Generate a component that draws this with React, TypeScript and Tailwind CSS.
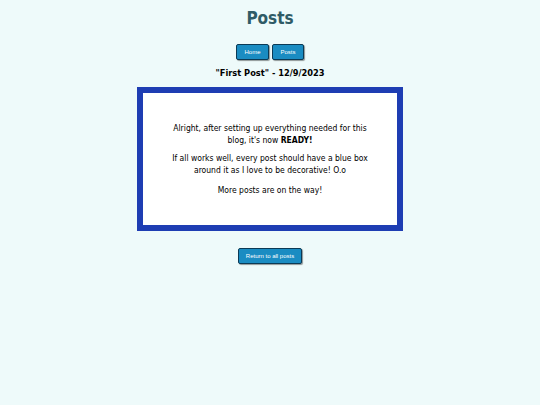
export default function App() {
  const btn =
    "whitespace-nowrap rounded-[2px] border border-[#0b3a55] bg-[#1a8cc2] text-[6px] leading-[14px] text-white shadow-[1px_1px_1px_rgba(0,0,0,0.4)] [font-family:'Liberation_Sans',Arial,sans-serif]";
  return (
    <div className="min-h-[405px] w-full bg-[#eefafa] [font-family:'DejaVu_Sans',Verdana,sans-serif] [font-stretch:condensed] text-black">
      <div className="flex flex-col items-center pt-[8px]">
        <h1 className="text-[17px] font-bold leading-[20px] text-[#2f5b66]">Posts</h1>
        <nav className="mt-[16px] flex gap-[3px]">
          <button className={`${btn} w-[33px]`}>Home</button>
          <button className={`${btn} w-[32px]`}>Posts</button>
        </nav>
        <h2 className="mt-[7px] text-[9.2px] font-bold leading-[12px]">"First Post" - 12/9/2023</h2>
        <div className="mt-[8px] w-[266px] border-[6px] border-[#1e3db3] bg-white px-[20px] py-[29px] text-center text-[8.5px] leading-[12px]">
          <p>
            Alright, after setting up everything needed for this blog, it's now <b>READY!</b>
          </p>
          <p className="mt-[6px]">
            If all works well, every post should have a blue box around it as I love to be decorative! O.o
          </p>
          <p className="mt-[8px]">More posts are on the way!</p>
        </div>
        <button className={`${btn} mt-[17px] w-[64px]`}>Return to all posts</button>
      </div>
    </div>
  );
}
